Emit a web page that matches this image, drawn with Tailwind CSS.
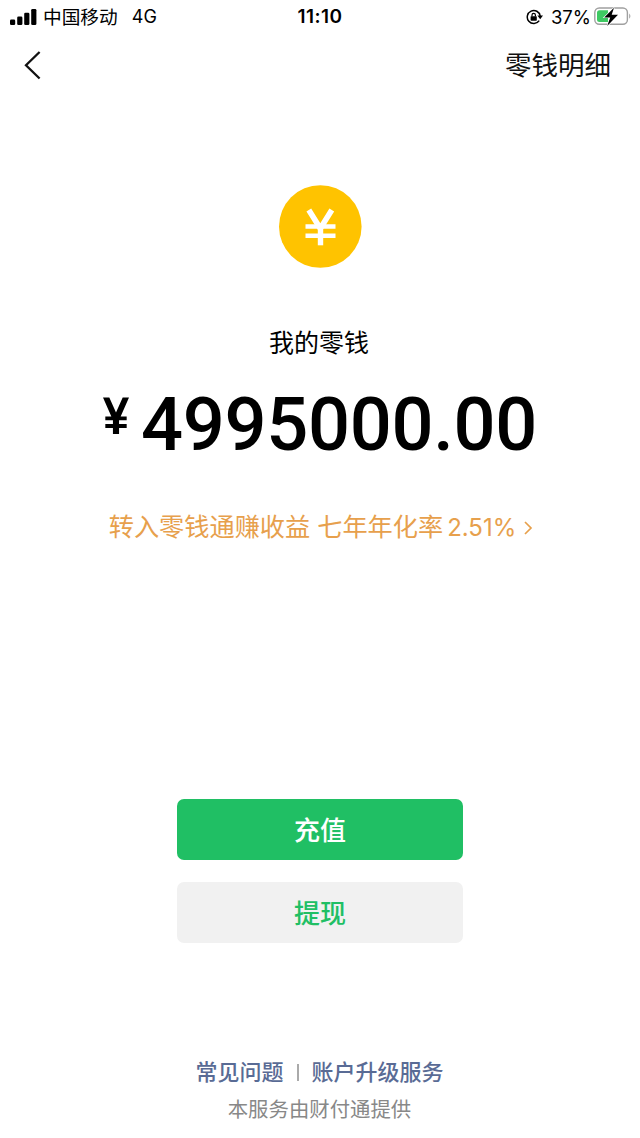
<!DOCTYPE html>
<html lang="zh-CN">
<head>
<meta charset="utf-8">
<title>我的零钱</title>
<script src="https://cdn.jsdelivr.net/npm/@tailwindcss/browser@4"></script>
</head>
<body class="bg-white">
<div class="flex h-[1138px] w-[640px] flex-col overflow-hidden bg-white font-['Inter','Noto_Sans_CJK_SC',sans-serif] whitespace-nowrap text-black">
  <header class="grid h-8 grid-cols-3 items-center text-[18.5px] leading-8">
    <div class="flex items-center pl-[10px]">
      <svg class="h-[17px] w-[27px]" viewBox="0 0 27 17"><rect x="0" y="10.5" width="5.2" height="5.6" rx="1.3"/><rect x="7.2" y="7.5" width="5.2" height="8.6" rx="1.3"/><rect x="14.2" y="3.8" width="5.2" height="12.3" rx="1.3"/><rect x="21.2" y="0" width="5.2" height="16.1" rx="1.3"/></svg>
      <span class="ml-[6px] pb-[2px] font-['Noto_Sans_CJK_SC'] text-[18.7px]">中国移动</span>
      <span class="ml-[14px] text-[18px]">4G</span>
    </div>
    <div class="text-center text-[19px] font-semibold tracking-[0.5px]">11:10</div>
    <div class="flex items-center justify-end pr-[7px]">
      <svg class="h-4 w-[18px]" viewBox="0 0 18 16" fill="none" stroke="#000" stroke-width="1.5"><path d="M13.200 11.600A6.500 6.500 0 1 1 14.200 7"/><path d="M11.400 6.600h5.600l-2.800 3.700z" fill="#000" stroke="none"/><rect x="4.600" y="7.200" width="6.200" height="4.500" rx=".6" fill="#000" stroke="none"/><path d="M6 7.500V6a1.700 1.700 0 0 1 3.400 0v1.500" stroke-width="1.200"/></svg>
      <span class="ml-[7px] text-[18.500px]">37%</span>
      <svg class="ml-[3px] mr-px h-[20px] w-[38px]" viewBox="0 0 38 20"><rect x=".8" y="1" width="32.600" height="16.200" rx="4.500" fill="#fff" stroke="#a0a0a0" stroke-width="1.400"/><path d="M5.500 3.200H14V15H5.500a2.500 2.500 0 0 1-2.500-2.500V5.700A2.500 2.500 0 0 1 5.500 3.200z" fill="#3ec962"/><path d="M35.200 6.400q2.400 2.700 0 5.400z" fill="#a0a0a0"/><path d="M20 .8 10.200 10.500h6l-3 8.500L24 7.800h-6.300z" stroke="#fff" stroke-width="1.200" paint-order="stroke"/></svg>
    </div>
  </header>

  <nav class="flex h-[66px] items-center justify-between pr-[29px] pl-6">
    <svg class="h-[30px] w-[18px]" viewBox="0 0 18 30" fill="none" stroke="#111" stroke-width="2.300"><path d="M15.600 2 2 15.200 15.600 28.500"/></svg>
    <span class="pt-[2px] text-[26.500px] text-[#111]">零钱明细</span>
  </nav>

  <main class="flex flex-col items-center">
    <div class="mt-[87px] size-[83px]">
      <svg class="size-full" viewBox="0 0 83 83"><circle cx="41.300" cy="41.500" r="41.300" fill="#ffc300"/><path d="M29.800 25 41.300 43.500 52.800 25" fill="none" stroke="#fff" stroke-width="5.600"/><path d="M26.500 41.500h30M26.500 50.700h30" stroke="#fff" stroke-width="4.500"/><path d="M41.500 41v19.300" stroke="#fff" stroke-width="5.400"/></svg>
    </div>
    <h1 class="mt-[55px] pr-[2px] text-[25px] leading-10">我的零钱</h1>
    <div class="mt-[16px] flex h-[90px] items-start font-['Roboto'] font-medium">
      <svg class="mt-[18px] h-[38px] w-[26px]" viewBox="0 0 28 38" preserveAspectRatio="none"><path d="M0 .500h6.800L14 15.500 21.200.500H28L19 19.500h6.500v3.800h-8.200v3.800h8.200v3.900h-8.200v6h-6.600v-6H2.500v-3.900h8.200v-3.800H2.500v-3.800H9z"/></svg>
      <span class="ml-[12px] pt-px text-[74px] leading-[90px] tracking-[-0.300px]">4995000.00</span>
    </div>
    <a class="mt-[39px] flex h-10 items-center pl-[2px] text-[25.200px] text-[#e7a04c]">
      <span>转入零钱通赚收益</span><span class="ml-[7px]">七年年化率</span><span class="ml-1 text-[24px]">2.51%</span>
      <svg class="ml-[8px] h-4 w-[9px]" viewBox="0 0 9 16" fill="none" stroke="currentColor" stroke-width="1.700"><path d="m1 2 6 6-6 6"/></svg>
    </a>
    <div class="mt-[251px] flex w-[286px] flex-col gap-[22px] text-[26px] font-medium">
      <button class="h-[61px] rounded-[7px] bg-[#20bf64] pt-[2px] text-white">充值</button>
      <button class="h-[61px] rounded-[7px] bg-[#f1f1f1] pt-[2px] text-[#20bf64]">提现</button>
    </div>
  </main>

  <footer class="mt-[111px] flex flex-col items-center pr-px">
    <div class="flex h-9 items-center text-[22px] font-medium text-[#596b95]"><span>常见问题</span><i class="mx-[13px] h-[17px] w-[2px] bg-[#aaa]"></i><span>账户升级服务</span></div>
    <p class="mt-[2px] text-[20.400px] leading-9 text-[#888]">本服务由财付通提供</p>
  </footer>
</div>
</body>
</html>
